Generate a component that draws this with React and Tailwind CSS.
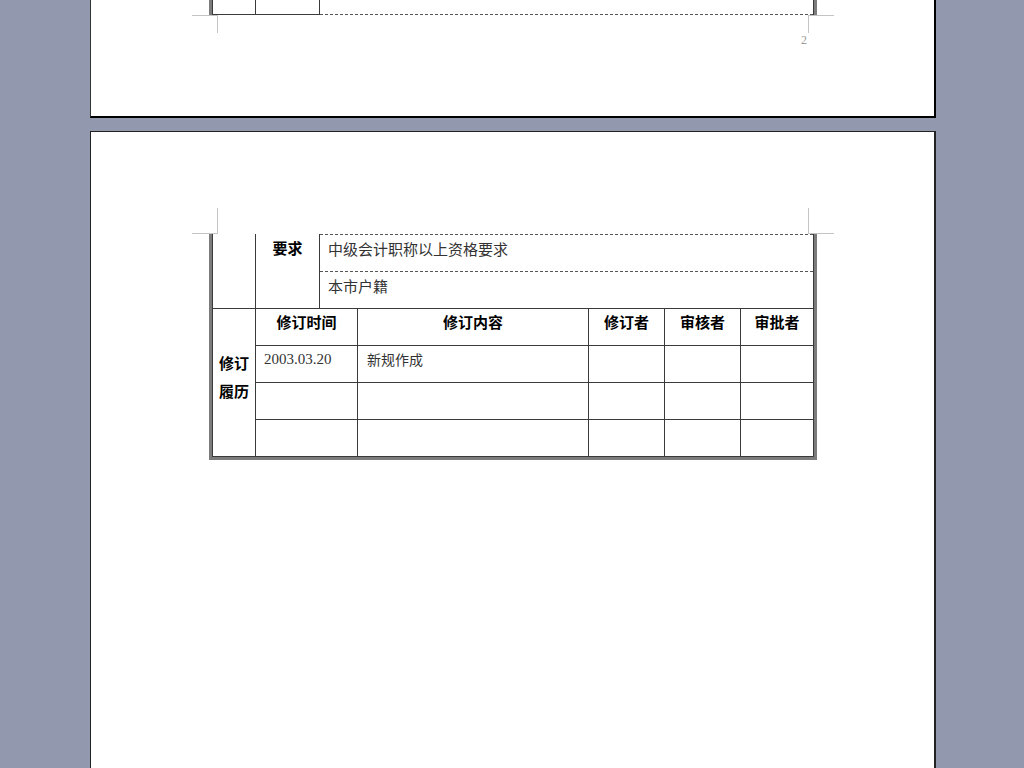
import React from 'react';

const cjk = { fontFamily: '"Noto Sans CJK SC", "Noto Sans", sans-serif' };

const header = ['修订时间', '修订内容', '修订者', '审核者', '审批者'];
const rows = [
  ['2003.03.20', '新规作成', '', '', ''],
  ['', '', '', '', ''],
  ['', '', '', '', ''],
];

const CornerMarks = ({ top }) => (
  <div className="flex">
    <div
      className={`ml-[101px] w-[26px] border-r border-[#c4c4c4] ${
        top ? 'h-[18px] border-t' : 'h-[26px] border-b'
      }`}
    />
    <div
      className={`ml-[590px] w-[26px] border-l border-[#c4c4c4] ${
        top ? 'h-[18px] border-t' : 'h-[26px] border-b'
      }`}
    />
  </div>
);

const RevisionTable = () => (
  <div className="grid grid-cols-[102px_231px_76px_76px_1fr]">
    {header.map((h, i) => (
      <div
        key={h}
        className={`h-[37px] border-b border-[#3a3a3a] pt-[4px] text-center text-[15px] leading-[18px] font-bold text-black ${
          i < 4 ? 'border-r' : ''
        }`}
      >
        {h}
      </div>
    ))}
    {rows.map((r, ri) =>
      r.map((c, ci) => (
        <div
          key={`${ri}-${ci}`}
          className={`border-[#3a3a3a] pt-[4px] text-[14px] leading-[18px] text-[#333] ${
            ci < 4 ? 'border-r' : ''
          } ${ri < 2 ? 'h-[37px] border-b' : 'h-[36px]'} ${ci === 0 ? 'pl-[8px]' : 'pl-[9px]'}`}
          style={ci === 0 ? { fontFamily: '"Liberation Serif", serif', fontSize: 15 } : undefined}
        >
          {c}
        </div>
      ))
    )}
  </div>
);

export default function App() {
  return (
    <div className="h-[768px] w-[1024px] overflow-hidden bg-[#9299af]" style={cjk}>
      {/* page 1 (bottom part) */}
      <div className="ml-[90px] h-[118px] w-[846px] border-l border-r-2 border-b-2 border-l-[#333] border-r-black border-b-black bg-white">
        <div className="ml-[118px] w-[608px] border-l-[3px] border-r-[3px] border-[#7c7c7c]">
          <div className="flex h-[15px] border-l border-r border-[#3a3a3a]">
            <div className="w-[43px] border-r border-b border-[#3a3a3a]" />
            <div className="w-[64px] border-r border-b border-[#3a3a3a]" />
            <div className="flex-1 border-b border-dashed border-[#555]" />
          </div>
        </div>
        <CornerMarks top />
        <div
          className="ml-[710px] mt-[1px] text-[12px] leading-none text-[#9a9a9a]"
          style={{ fontFamily: '"Liberation Serif", serif' }}
        >
          2
        </div>
      </div>

      {/* page 2 */}
      <div className="ml-[90px] mt-[13px] h-[700px] w-[846px] border-l border-t border-r-2 border-[#222] bg-white pt-[76px]">
        <CornerMarks />
        <div className="ml-[118px] w-[608px] border-l-[3px] border-r-[3px] border-b-[3px] border-[#7c7c7c]">
          <div className="border-l border-r border-b border-[#3a3a3a]">
            {/* 要求 */}
            <div className="flex h-[74px]">
              <div className="w-[43px] border-r border-[#3a3a3a]" />
              <div className="w-[64px] border-r border-[#3a3a3a] pt-[5px] text-center text-[15px] leading-[18px] font-bold text-black">
                要求
              </div>
              <div className="flex flex-1 flex-col text-[15px] leading-[18px] text-[#333]">
                <div className="h-[38px] border-t border-b border-dashed border-[#555] pl-[8px] pt-[5px]">
                  中级会计职称以上资格要求
                </div>
                <div className="h-[36px] pl-[8px] pt-[5px]">本市户籍</div>
              </div>
            </div>
            {/* 修订履历 */}
            <div className="flex border-t border-[#3a3a3a]">
              <div className="flex w-[43px] flex-col items-center justify-center border-r border-[#3a3a3a] pb-[12px] text-[15px] leading-[28px] font-bold text-black">
                <span>修订</span>
                <span>履历</span>
              </div>
              <div className="flex-1">
                <RevisionTable />
              </div>
            </div>
          </div>
        </div>
      </div>
    </div>
  );
}
